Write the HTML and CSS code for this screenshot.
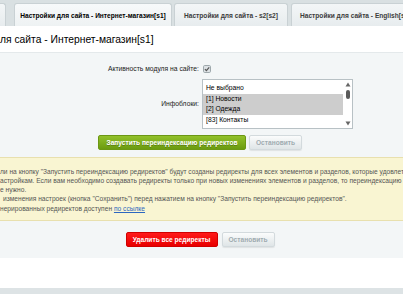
FILE: index.html
```html
<!DOCTYPE html>
<html lang="ru">
<head>
<meta charset="utf-8">
<title>Настройки</title>
<link rel="stylesheet" href="styles.css">
</head>
<body>
<div class="tabs">
  <div class="tab tab-cut"></div>
  <div class="tab tab-active">Настройки для сайта - Интернет-магазин[s1]</div>
  <div class="tab tab-s2">Настройки для сайта - s2[s2]</div>
  <div class="tab tab-en">Настройки для сайта - English[s3]</div>
</div>
<div class="title">ля сайта - Интернет-магазин[s1]</div>
<div class="form">
  <div class="grid">
    <div class="label">Активность модуля на сайте:</div>
    <div class="field">
      <svg class="check" width="8" height="8" viewBox="0 0 8 8"><rect x="0.5" y="0.5" width="7" height="7" rx="1.2" fill="#dce1e4" stroke="#9ea8ac"/><path d="M1.9 4.1 L3.4 5.6 L6.2 2.3" fill="none" stroke="#555" stroke-width="1.2"/></svg>
    </div>
    <div class="label">Инфоблоки:</div>
    <div class="field">
      <div class="listbox">
        <div class="options">
          <div class="option">Не выбрано</div>
          <div class="option sel">[1] Новости</div>
          <div class="option sel">[2] Одежда</div>
          <div class="option">[83] Контакты</div>
        </div>
        <div class="scroll">
          <svg width="6" height="5" viewBox="0 0 6 5"><path d="M3 0.5 L5.5 4.5 L0.5 4.5 Z" fill="#666"/></svg>
          <div class="thumb"></div>
          <div class="track"></div>
          <svg width="6" height="5" viewBox="0 0 6 5"><path d="M0.5 0.5 L5.5 0.5 L3 4.5 Z" fill="#666"/></svg>
        </div>
      </div>
    </div>
  </div>
  <div class="actions">
    <div class="btn btn-green">Запустить переиндексацию редиректов</div>
    <div class="btn btn-gray">Остановить</div>
  </div>
</div>
<div class="note">
  <div class="line">ли на кнопку "Запустить переиндексацию редиректов" будут созданы редиректы для всех элементов и разделов, которые удовлетворяют</div>
  <div class="line">астройкам. Если вам необходимо создавать редиректы только при новых изменениях элементов и разделов, то переиндексацию</div>
  <div class="line">е нужно.</div>
  <div class="line line-in">изменения настроек (кнопка "Сохранить") перед нажатием на кнопку "Запустить переиндексацию редиректов".</div>
  <div class="line">нерированных редиректов доступен <a class="link" href="#">по ссылке</a></div>
</div>
<div class="bottom-actions">
  <div class="btn btn-red">Удалить все редиректы</div>
  <div class="btn btn-gray">Остановить</div>
</div>
<div class="blank"></div>
<div class="footer-bar"></div>
</body>
</html>
```
FILE: styles.css
```css
body {
  margin: 0;
  width: 403px;
  height: 294px;
  overflow: hidden;
  background: #fff;
  font-family: "Liberation Sans", Arial, sans-serif;
  color: #000;
}

.tabs {
  height: 26px;
  box-sizing: border-box;
  padding-top: 3px;
  background: #d9e0e2;
  display: flex;
  align-items: flex-end;
  overflow: hidden;
}

.tab {
  height: 23px;
  box-sizing: border-box;
  flex-shrink: 0;
  display: flex;
  align-items: center;
  justify-content: center;
  font-size: 6.6px;
  font-weight: bold;
  color: #3c3c3c;
  white-space: nowrap;
  background: linear-gradient(#f3f6f7, #e7ecee);
  border: 1px solid #c9d1d4;
  border-bottom: none;
  border-radius: 3px 3px 0 0;
}

.tab-cut {
  width: 6px;
  border-left: none;
  border-radius: 0 3px 0 0;
}

.tab-active {
  width: 158px;
  margin-left: 8px;
  background: linear-gradient(#f7f9fa, #eef2f3);
  color: #000;
}

.tab-s2 {
  width: 114px;
  margin-left: 2px;
}

.tab-en {
  width: 130px;
  margin-left: 3px;
  justify-content: flex-start;
  padding-left: 8px;
}

.title {
  height: 27px;
  box-sizing: border-box;
  padding-top: 1px;
  display: flex;
  align-items: center;
  font-size: 10.3px;
  white-space: nowrap;
  border-bottom: 1px solid #e4e9eb;
}

.form {
  background: #f3f6f7;
  padding: 10px 0 7px;
}

.grid {
  display: grid;
  grid-template-columns: 200px 1fr;
  column-gap: 2px;
  row-gap: 4px;
  align-items: center;
}

.label {
  text-align: right;
  font-size: 6.75px;
  line-height: 12px;
  color: #222;
  padding-right: 1px;
}

.field {
  display: flex;
  align-items: center;
}

.check {
  display: block;
  margin-left: 1px;
}

.listbox {
  width: 151px;
  height: 50px;
  box-sizing: border-box;
  border: 1px solid #b8c1c5;
  background: #fff;
  display: flex;
}

.options {
  flex: 1;
  padding-top: 3px;
}

.option {
  font-size: 6.75px;
  line-height: 10.5px;
  padding-left: 3px;
  white-space: nowrap;
}

.option.sel {
  background: #cdcdcd;
}

.scroll {
  width: 9px;
  display: flex;
  flex-direction: column;
  align-items: center;
  padding: 2px 0 2px;
}

.thumb {
  width: 4px;
  height: 9px;
  margin-top: 3px;
  border-radius: 2px;
  background: #5a5a5a;
}

.track {
  flex: 1;
}

.actions,
.bottom-actions {
  display: flex;
  justify-content: center;
  padding-right: 3px;
}

.actions {
  margin-top: 6px;
  gap: 3px;
}

.btn {
  height: 15px;
  box-sizing: border-box;
  display: flex;
  align-items: center;
  justify-content: center;
  font-size: 6.6px;
  font-weight: bold;
  white-space: nowrap;
  border-radius: 2px;
}

.btn-green {
  width: 148px;
  color: #fff;
  background: linear-gradient(#92c12a, #6b9b10);
  border: 1px solid #6c9714;
  text-shadow: 0 1px 0 rgba(0, 0, 0, 0.25);
}

.btn-gray {
  width: 53px;
  color: #9fabb0;
  background: linear-gradient(#fbfcfc, #dfe5e7);
  border: 1px solid #d3dadd;
  box-shadow: 0 1px 1px rgba(0, 0, 0, 0.08);
}

.btn-red {
  width: 92px;
  color: #fff;
  background: linear-gradient(#ff1a1a, #e80000);
  border: 1px solid #d00000;
}

.note {
  height: 64px;
  box-sizing: border-box;
  padding-top: 8.5px;
  background: #f9f5d2;
  border-top: 1px solid #e8e0ae;
  border-bottom: 1px solid #e8e0ae;
  font-size: 6.65px;
  line-height: 9.3px;
  color: #555;
  white-space: nowrap;
  overflow: hidden;
}

.line-in {
  padding-left: 3px;
}

.link {
  color: #2c67c0;
  text-decoration: underline;
}

.bottom-actions {
  height: 37px;
  align-items: center;
  gap: 4px;
  background: #f3f6f7;
}

.blank {
  height: 30px;
  background: #fff;
}

.footer-bar {
  height: 10px;
  background: #dde3e5;
}
```
